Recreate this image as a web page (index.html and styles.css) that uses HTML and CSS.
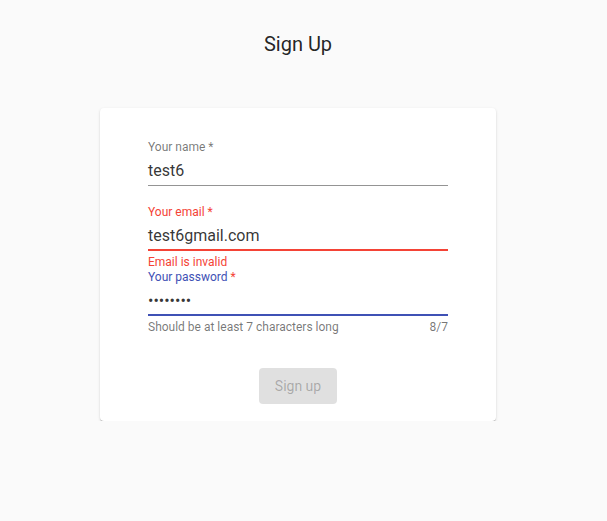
FILE: index.html
```html
<!DOCTYPE html>
<html lang="en">
<head>
<meta charset="utf-8">
<title>Sign Up</title>
<link rel="stylesheet" href="styles.css">
</head>
<body>
<main class="page">
  <h1 class="title">Sign Up</h1>
  <form class="card">
    <div class="field">
      <label class="label">Your name <span class="ast">*</span></label>
      <div class="control">test6</div>
      <div class="helper"></div>
    </div>
    <div class="field field-error">
      <label class="label">Your email <span class="ast">*</span></label>
      <div class="control">test6gmail.com</div>
      <div class="helper">Email is invalid</div>
    </div>
    <div class="field field-focus">
      <label class="label">Your password <span class="ast ast-err">*</span></label>
      <div class="control control-pass">••••••••</div>
      <div class="helper"><span>Should be at least 7 characters long</span><span>8/7</span></div>
    </div>
    <div class="actions">
      <button type="button" class="btn" disabled>Sign up</button>
    </div>
  </form>
</main>
</body>
</html>
```

FILE: styles.css
```css
html, body {
  margin: 0;
  padding: 0;
  background: #fafafa;
  font-family: Roboto, "Liberation Sans", Arial, sans-serif;
  color: rgba(0, 0, 0, 0.87);
}

.page {
  width: 596px;
  display: flex;
  flex-direction: column;
  align-items: center;
}

.title {
  margin: 28px 0 0;
  font-size: 20px;
  line-height: 32px;
  font-weight: 400;
  color: rgba(0, 0, 0, 0.87);
}

.card {
  margin-top: 48px;
  width: 396px;
  box-sizing: border-box;
  padding: 31px 48px 17px;
  background: #fff;
  border-radius: 4px;
  box-shadow: 0 2px 1px -1px rgba(0, 0, 0, 0.2), 0 1px 1px 0 rgba(0, 0, 0, 0.14), 0 1px 3px 0 rgba(0, 0, 0, 0.12);
  display: flex;
  flex-direction: column;
}

.field {
  display: flex;
  flex-direction: column;
  height: 65px;
}

.label {
  display: block;
  font-size: 12px;
  line-height: 16px;
  height: 16px;
  color: rgba(0, 0, 0, 0.54);
}

.control {
  box-sizing: border-box;
  height: 31px;
  padding: 6px 0 0;
  font-size: 16px;
  line-height: 19px;
  border-bottom: 1px solid rgba(0, 0, 0, 0.42);
  color: rgba(0, 0, 0, 0.8);
}

.helper {
  margin-top: 4px;
  font-size: 12px;
  line-height: 14px;
  height: 14px;
  color: rgba(0, 0, 0, 0.54);
  display: flex;
  justify-content: space-between;
}

.field-error .label,
.field-error .helper {
  color: #f44336;
}

.field-error .control {
  border-bottom: 2px solid #f44336;
}

.field-focus .label {
  color: #3f51b5;
}

.field-focus .control {
  border-bottom: 2px solid #3f51b5;
}

.ast-err {
  color: #f44336;
}

.actions {
  margin-top: 34px;
  display: flex;
  justify-content: center;
}

.btn {
  height: 36px;
  width: 78px;
  padding: 0;
  border: none;
  border-radius: 4px;
  background: rgba(0, 0, 0, 0.12);
  color: rgba(0, 0, 0, 0.26);
  font-family: Roboto, "Liberation Sans", Arial, sans-serif;
  font-size: 14px;
  font-weight: 400;
  line-height: 36px;
}
```
